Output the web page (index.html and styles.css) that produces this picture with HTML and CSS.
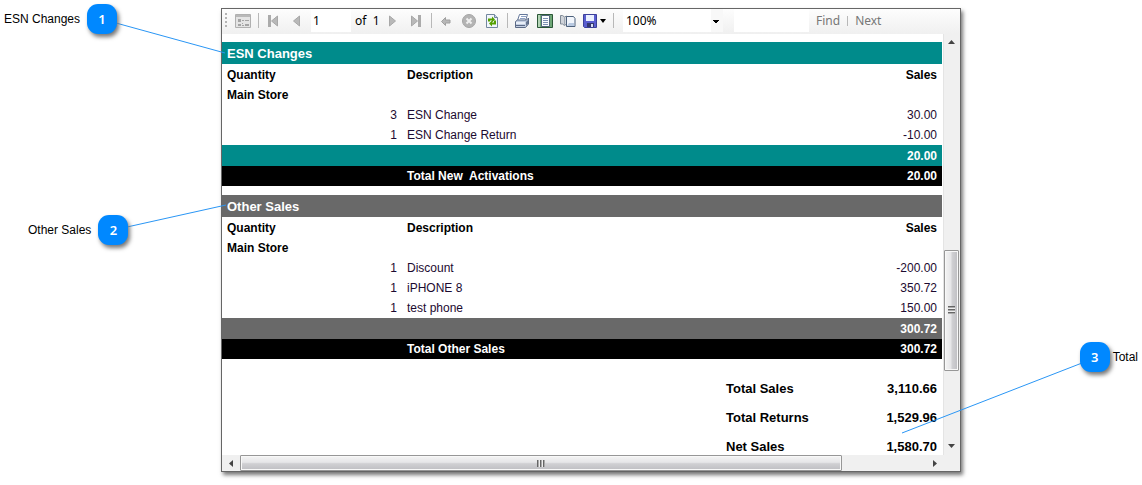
FILE: index.html
```
<!DOCTYPE html>
<html lang="en">
<head>
    <meta charset="UTF-8">
    <meta name="viewport" content="width=device-width, initial-scale=1.0">
    <title>Sales Report</title>
    <link rel="stylesheet" href="styles.css">
</head>
<body>
    <main class="viewer">
        <div class="toolbar">
            <span class="grip"></span>
            <button class="tool" aria-label="Parameters">
                <svg width="16" height="16" viewBox="0 0 16 16"><path fill="#e4e4e4" stroke="#b0b0b0" d="M.5 1.500h15v13H.5z"/><path fill="#b8b8b8" d="M1 2h14v2H1z"/><path fill="#a4a4a4" d="M3 6h3v3H3zM3 11h3v2H3zM7 7h2v1H7zM10 7h4v1h-4zM7 10h1v1H7zM7 12h2v1H7zM10 11h4v2h-4z"/></svg>
            </button>
            <span class="sep"></span>
            <button class="tool" aria-label="First page">
                <svg width="16" height="16" viewBox="0 0 16 16"><path fill="#ababab" d="M3 2h3v12H3z"/><path fill="#b8b8b8" stroke="#a8a8a8" d="M12.500 3v10l-6-5z"/></svg>
            </button>
            <button class="tool" aria-label="Previous page">
                <svg width="16" height="16" viewBox="0 0 16 16"><path fill="#b8b8b8" stroke="#a8a8a8" d="M11.500 3v10l-6-5z"/></svg>
            </button>
            <input class="page" type="text" value="1" aria-label="Page">
            <span class="count">of&nbsp; 1</span>
            <button class="tool" aria-label="Next page">
                <svg width="16" height="16" viewBox="0 0 16 16"><path fill="#b8b8b8" stroke="#a8a8a8" d="M4.500 3v10l6-5z"/></svg>
            </button>
            <button class="tool" aria-label="Last page">
                <svg width="16" height="16" viewBox="0 0 16 16"><path fill="#ababab" d="M10 2h3v12h-3z"/><path fill="#b8b8b8" stroke="#a8a8a8" d="M3.500 3v10l6-5z"/></svg>
            </button>
            <span class="sep"></span>
            <button class="tool" aria-label="Back">
                <svg width="16" height="16" viewBox="0 0 16 16"><path fill="#b8b8b8" stroke="#a0a0a0" d="M3.500 8.500l4-4v2.500h4.500v3H7.500v2.500z"/></svg>
            </button>
            <button class="tool" aria-label="Stop">
                <svg width="16" height="16" viewBox="0 0 16 16"><circle cx="8" cy="8" r="6.500" fill="#b4b4b4" stroke="#a6a6a6"/><path stroke="#f0f0f0" stroke-width="2" d="M5.500 5.500l5 5M10.500 5.500l-5 5"/></svg>
            </button>
            <button class="tool" aria-label="Refresh">
                <svg width="16" height="16" viewBox="0 0 16 16"><path fill="#f1f6fc" stroke="#73879f" d="M2.500 1.500h8l3 3v10h-11z"/><path fill="#c5d5e8" stroke="#73879f" d="M10.500 1.500v3h3"/><path fill="none" stroke="#55a000" stroke-width="2" d="M5 8.500V6.500h3M11 7.500v3H8"/><path fill="#55a000" d="M8 3.500l3 3-3 3zM8 7.500v6l-3-3z"/></svg>
            </button>
            <span class="sep"></span>
            <button class="tool" aria-label="Print">
                <svg width="16" height="16" viewBox="0 0 16 16"><path fill="#fff" stroke="#64779a" d="M5.500 1.500h8l-2 6h-8z"/><path stroke="#8da0c4" d="M7 3.500h5M6 5.500h5"/><path fill="#c3cee2" stroke="#5b6a86" d="M1.500 8.500l2-1.500h9l2-2v6l-3 3.500h-10z"/><path fill="#e9eff8" d="M2 9h9v2H2z"/><path stroke="#5b6a86" d="M2 12.500h9"/><path fill="#66758f" d="M12 9l2-2v4l-2 2z"/></svg>
            </button>
            <button class="tool" aria-label="Print layout">
                <svg width="16" height="16" viewBox="0 0 16 16"><path fill="#6fa777" stroke="#2b5737" d="M.5 1.500h15v13H.5z"/><path fill="#b4d5b6" d="M1 2h2v12H1z"/><path fill="#fafcff" stroke="#51657a" d="M4.500 2.500h8v11h-8z"/><path stroke="#7d91b5" d="M6 5.500h5M6 7.500h5M6 9.500h5M6 11.500h5"/></svg>
            </button>
            <button class="tool" aria-label="Page setup">
                <svg width="16" height="16" viewBox="0 0 16 16"><path fill="#d0d4da" stroke="#808a96" d="M.5 2.500h2l2 1.500 2-1v8l-2 1.500-2-1.500h-2z"/><path stroke="#a3abb5" d="M4.500 4v8"/><path fill="#f2f6fc" stroke="#4d617c" d="M6.500 3.500h7l1.500 2v8H6.500z"/><path fill="#b9cae2" d="M9 10h5v3H7z"/></svg>
            </button>
            <button class="tool save" aria-label="Export">
                <svg width="16" height="16" viewBox="0 0 16 16"><path fill="#5a5ed0" stroke="#3c409a" d="M1.500 1.500h13v13h-12l-1-1z"/><path fill="#eaf0ff" d="M4 2h8v6H4z"/><path fill="#34386f" d="M5 10h7v4H5z"/><path fill="#d8def5" d="M9 11h2v3H9z"/></svg>
                <svg width="6" height="4" viewBox="0 0 6 4"><path d="M0 0h6L3 4z"/></svg>
            </button>
            <span class="sep"></span>
            <select class="zoom" aria-label="Zoom"><option>100%</option></select>
            <input class="search" type="text" aria-label="Search text">
            <button class="link">Find</button>
            <span class="sep short"></span>
            <button class="link">Next</button>
        </div>

        <div class="report">
            <table class="esn">
                <caption>ESN Changes</caption>
                <thead>
                    <tr><th class="qty">Quantity</th><th>Description</th><th class="num">Sales</th></tr>
                </thead>
                <tbody>
                    <tr><th colspan="3">Main Store</th></tr>
                    <tr><td class="num">3</td><td>ESN Change</td><td class="num">30.00</td></tr>
                    <tr><td class="num">1</td><td>ESN Change Return</td><td class="num">-10.00</td></tr>
                </tbody>
                <tfoot>
                    <tr class="subtotal"><td></td><td></td><td class="num">20.00</td></tr>
                    <tr class="total"><td></td><td>Total New&nbsp; Activations</td><td class="num">20.00</td></tr>
                </tfoot>
            </table>

            <table class="other">
                <caption>Other Sales</caption>
                <thead>
                    <tr><th class="qty">Quantity</th><th>Description</th><th class="num">Sales</th></tr>
                </thead>
                <tbody>
                    <tr><th colspan="3">Main Store</th></tr>
                    <tr><td class="num">1</td><td>Discount</td><td class="num">-200.00</td></tr>
                    <tr><td class="num">1</td><td>iPHONE 8</td><td class="num">350.72</td></tr>
                    <tr><td class="num">1</td><td>test phone</td><td class="num">150.00</td></tr>
                </tbody>
                <tfoot>
                    <tr class="subtotal"><td></td><td></td><td class="num">300.72</td></tr>
                    <tr class="total"><td></td><td>Total Other Sales</td><td class="num">300.72</td></tr>
                </tfoot>
            </table>

            <table class="summary">
                <tr><th>Total Sales</th><td class="num">3,110.66</td></tr>
                <tr><th>Total Returns</th><td class="num">1,529.96</td></tr>
                <tr><th>Net Sales</th><td class="num">1,580.70</td></tr>
            </table>
        </div>

        <div class="vscroll">
            <button class="arrow" aria-label="Scroll up"><svg width="7" height="4" viewBox="0 0 7 4"><path d="M0 4h7L3.500 0z"/></svg></button>
            <span class="thumb"></span>
            <button class="arrow" aria-label="Scroll down"><svg width="7" height="4" viewBox="0 0 7 4"><path d="M0 0h7L3.500 4z"/></svg></button>
        </div>
        <div class="hscroll">
            <button class="arrow" aria-label="Scroll left"><svg width="4" height="7" viewBox="0 0 4 7"><path d="M4 0v7L0 3.500z"/></svg></button>
            <span class="thumb"></span>
            <button class="arrow" aria-label="Scroll right"><svg width="4" height="7" viewBox="0 0 4 7"><path d="M0 0v7l4-3.500z"/></svg></button>
        </div>
    </main>

    <!-- callouts -->
    <svg class="lines left" width="240" height="250"><path d="M116 23L225 53M127 227L226 205"/></svg>
    <svg class="lines right" width="250" height="450"><path d="M190 363L10 433"/></svg>
    <div class="callout esn-note">ESN Changes <span class="badge">1</span></div>
    <div class="callout other-note">Other Sales <span class="badge">2</span></div>
    <div class="callout total-note"><span class="badge">3</span> Total</div>
</body>
</html>
```
FILE: styles.css
```
* {
    box-sizing: border-box;
}
body {
    margin: 0;
    height: 100vh;
    padding: 8px 181px 13px 221px;
    position: relative;
    background: #fff;
    color: #000;
    font-family: "Liberation Sans", Arial, sans-serif;
    font-size: 12px;
}
button {
    margin: 0;
    padding: 0;
    border: 0;
    background: none;
}
.viewer {
    height: 100%;
    display: grid;
    grid-template-columns: minmax(0, 1fr) 17px;
    grid-template-rows: 25px minmax(0, 1fr) 16px;
    border: 1px solid #666;
    box-shadow: 2px 3px 4px #777;
    background: #f0f0f0;
}

/* toolbar */
.toolbar {
    grid-column: 1 / 3;
    display: flex;
    align-items: center;
    overflow: hidden;
    padding-bottom: 2px;
    background: linear-gradient(#fdfdfd, #f0f0f0);
    font-family: "Noto Sans", sans-serif;
    font-size: 12px;
}
.toolbar > * {
    flex: none;
}
.grip {
    width: 2px;
    height: 15px;
    margin: 0 4px 0 3px;
    background: repeating-linear-gradient(#b4b4b4 0 2px, transparent 2px 4px);
}
.tool {
    width: 23px;
    height: 23px;
    display: flex;
    align-items: center;
    justify-content: center;
}
.save {
    width: 30px;
    gap: 2px;
}
.sep {
    width: 1px;
    height: 15px;
    margin: 0 2px 0 4px;
    background: #b8b8b8;
}
.short {
    height: 10px;
    margin: 0 7px;
}
.page,
.search,
.zoom {
    height: 23px;
    border: 0;
    border-radius: 0;
    background: #fff;
    color: #000;
    font: inherit;
}
.page {
    width: 40px;
    margin: 0 4px;
    padding: 0 2px;
}
.count {
    width: 26px;
    white-space: nowrap;
}
.zoom {
    width: 100px;
    margin-left: 7px;
    padding: 0 3px;
    appearance: none;
    background:
        linear-gradient(#000, #000) right 4px top 11px / 6px 1px no-repeat,
        linear-gradient(#000, #000) right 5px top 12px / 4px 1px no-repeat,
        linear-gradient(#000, #000) right 6px top 13px / 2px 1px no-repeat,
        linear-gradient(#f8f8f8, #f8f8f8) right / 12px 100% no-repeat,
        #fff;
}
.search {
    width: 75px;
    margin: 0 7px 0 11px;
}
.link {
    color: #777;
    font: inherit;
}

/* report */
.report {
    overflow: hidden;
    padding: 8px 1px 0 0;
    background: #fff;
}
table {
    border-collapse: collapse;
}
th,
td {
    height: 20px;
    padding: 0 5px;
    line-height: 20px;
    text-align: left;
}
.num {
    text-align: right;
}
.esn,
.other {
    width: 100%;
    margin-bottom: 9px;
}
caption {
    height: 23px;
    padding: 0 5px;
    border-bottom: 1px solid #fff;
    color: #fff;
    font-size: 13px;
    font-weight: bold;
    line-height: 23px;
    text-align: left;
}
.qty {
    width: 180px;
}
tbody td {
    color: #1c0a30;
}
tfoot td {
    color: #fff;
    font-weight: bold;
}
.subtotal td {
    height: 21px;
}
.esn caption,
.esn .subtotal {
    background: #008b8b;
}
.other caption,
.other .subtotal {
    background: #696969;
}
.total {
    background: #000;
}
.summary {
    width: 221px;
    margin: 15px 0 0 auto;
    font-size: 13px;
}
.summary th,
.summary td {
    height: 29px;
    color: #000;
    font-weight: bold;
}

/* scrollbars */
.vscroll {
    display: grid;
    grid-template-rows: 16px 199fr 121fr 67fr 17px;
    padding: 0 1px 0 0;
    border-left: 1px solid #e4e4e4;
}
.hscroll {
    display: grid;
    grid-template-columns: 18px 602fr 84fr 17px;
}
.arrow {
    display: flex;
    align-items: center;
    justify-content: center;
}
.arrow svg {
    fill: #444;
}
.thumb {
    border: 1px solid #979797;
    border-radius: 1px;
    box-shadow: inset 0 0 0 1px #f8f8f8;
}
.vscroll .thumb {
    grid-row: 3;
    background:
        repeating-linear-gradient(#666 0 1px, #aaa 1px 2px, #eee 2px 3px) center / 7px 8px no-repeat,
        linear-gradient(to right, #f4f4f4, #e6e6e8 45%, #d0d0d3 55%, #bebec2);
}
.vscroll .arrow:last-child {
    grid-row: 5;
}
.hscroll .thumb {
    background:
        repeating-linear-gradient(to right, #666 0 1px, #aaa 1px 2px, #eee 2px 3px) center / 8px 7px no-repeat,
        linear-gradient(#f4f4f4, #e6e6e8 45%, #d0d0d3 55%, #bebec2);
}
.hscroll .arrow:last-child {
    grid-column: 4;
}

/* callouts pinned over the page */
.lines {
    position: absolute;
    top: 0;
    fill: none;
    stroke: #2a96f5;
    pointer-events: none;
}
.lines.left {
    left: 0;
}
.lines.right {
    right: 0;
}
.callout {
    position: absolute;
    display: flex;
    align-items: center;
    gap: 7px;
    white-space: nowrap;
}
.badge {
    width: 30px;
    height: 30px;
    border-radius: 11px;
    background: #0088ff;
    box-shadow: 2px 3px 4px #777;
    color: #fff;
    font-family: "Noto Sans", sans-serif;
    font-size: 13px;
    font-weight: 600;
    line-height: 30px;
    text-align: center;
}
.esn-note {
    top: 4px;
    left: 4px;
}
.other-note {
    top: 215px;
    left: 28px;
}
.total-note {
    top: 342px;
    right: 4px;
    gap: 3px;
}
```
